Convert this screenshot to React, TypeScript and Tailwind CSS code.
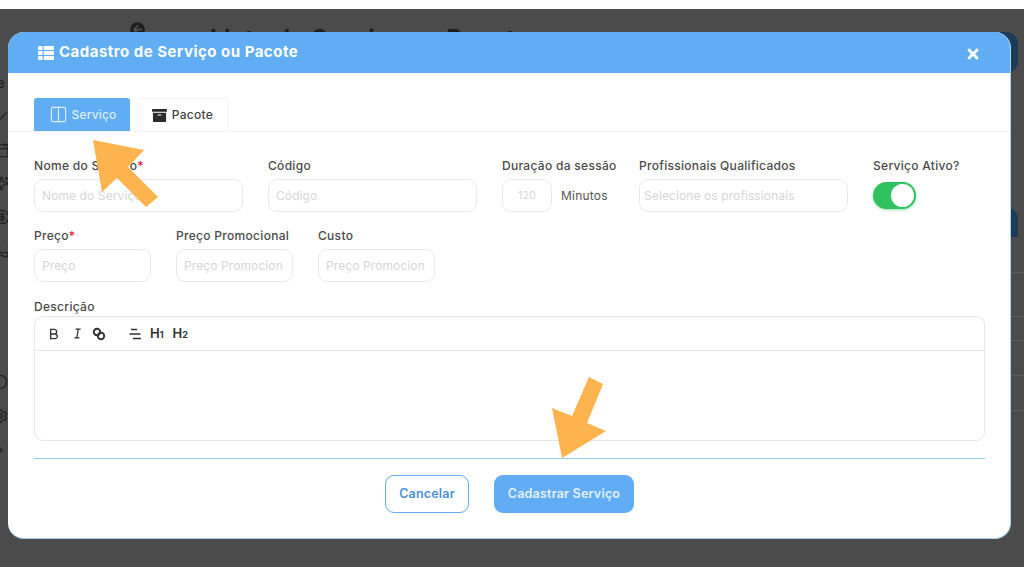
import React from "react";
import { FaThList, FaTimes, FaArchive, FaArrowCircleLeft } from "react-icons/fa";
import { RiBold, RiItalic } from "react-icons/ri";
import { Columns2, Calendar, Check, Sparkles, CircleDollarSign, Phone, Circle, Settings, ChevronRight } from "lucide-react";

const font = "font-['Inter','Liberation_Sans',sans-serif]";
const labelClass =
  "h-[22px] pt-[1px] text-[12px] font-medium leading-[16px] tracking-[0.3px] text-[#4a4a4a] whitespace-nowrap";

const Field = ({
  label,
  placeholder,
  width,
  required,
  inset = "px-[7px]",
}: {
  label: string;
  placeholder: string;
  width: string;
  required?: boolean;
  inset?: string;
}) => (
  <div className={`flex flex-col ${width}`}>
    <label className={labelClass}>
      {label}
      {required && <span className="text-[#e5203a]">*</span>}
    </label>
    <div className={`flex h-[33px] items-center rounded-[9px] border border-[#e9e9e9] bg-white ${inset}`}>
      <span className="text-[12px] tracking-[0.1px] whitespace-nowrap text-[#d6d6d6]">{placeholder}</span>
    </div>
  </div>
);

const ArrowOne = () => (
  <svg className="absolute left-[90px] top-[136px] h-[75px] w-[72px]" viewBox="90 136 72 75">
    <polygon
      points="93,140 144,150 128,167 158,197 146,207 117,178 102,192"
      fill="#fdb44f"
    />
  </svg>
);

const ArrowTwo = () => (
  <svg className="absolute left-[548px] top-[374px] h-[88px] w-[60px]" viewBox="548 374 60 88">
    <polygon
      points="589,377 603,384 587,423 606,431 562,458 552,408 572,416"
      fill="#fdb44f"
    />
  </svg>
);

const App = () => {
  return (
    <div className={`flex h-[576px] w-[1024px] flex-col overflow-hidden bg-white ${font}`}>
      <div className="relative mt-[9px] h-[558px] w-full overflow-hidden bg-[#4b4b4b]">
        {/* page behind the modal */}
        <FaArrowCircleLeft className="absolute left-[130px] top-[13px] text-[15px] text-[#1d1d1d]" />
        <div className="absolute left-[210px] top-0 h-[23px] overflow-hidden pt-[15px] text-[24px] font-bold leading-[30px] tracking-[0.5px] text-[#1d1d1d] whitespace-nowrap">
          Lista de Serviços e Pacotes
        </div>
        <div className="absolute left-[-6px] top-[66px] flex flex-col gap-[18px] text-[#222222]">
          <span className="pl-[3px] text-[13px] font-semibold leading-[16px]">e</span>
          <Check size={15} />
          <Calendar size={16} />
          <Sparkles size={15} />
          <CircleDollarSign size={16} />
          <Phone size={15} />
        </div>
        <div className="absolute left-[-8px] top-[365px] flex flex-col gap-[18px] text-[#222222]">
          <Circle size={16} />
          <Settings size={16} />
          <ChevronRight size={16} />
        </div>
        <div className="absolute left-[1000px] top-[23px] h-[41px] w-[18px] rounded-r-[12px] bg-[#1b3b57]" />
        <div className="absolute left-[1000px] top-[199px] h-[29px] w-[18px] rounded-tr-[10px] bg-[#1b3b57]" />
        <div className="absolute left-[1011px] top-[263px] h-px w-[13px] bg-[#5d5d5d]" />
        <div className="absolute left-[1011px] top-[307px] h-px w-[13px] bg-[#5d5d5d]" />
        <div className="absolute left-[1011px] top-[331px] h-px w-[13px] bg-[#5d5d5d]" />
        <div className="absolute left-[1011px] top-[366px] h-px w-[13px] bg-[#5d5d5d]" />
        <div className="absolute left-[1011px] top-[401px] h-px w-[13px] bg-[#5d5d5d]" />

        <div className="absolute left-[8px] top-[23px] flex h-[507px] w-[1003px] flex-col overflow-hidden rounded-[16px] border-b border-r border-[#a9d3ec] bg-white">
          <div className="flex h-[41px] shrink-0 items-center justify-between bg-[#60adf3] pl-[30px] pr-[29px] text-white">
            <div className="flex items-center gap-[5px]">
              <FaThList className="text-[16px]" />
              <span className="text-[15px] font-bold tracking-[0.5px]">Cadastro de Serviço ou Pacote</span>
            </div>
            <FaTimes className="mt-[3px] text-[16px]" />
          </div>

          <div className="mt-[25px] flex h-[34px] shrink-0 gap-[7px] border-b border-[#f3f3f3] pl-[26px]">
            <div className="flex w-[96px] items-center justify-center gap-[3px] rounded-t-[3px] bg-[#60adf3] pl-[2px] text-[12px] font-medium tracking-[0.2px] text-[#dcedfc]">
              <Columns2 size={19} strokeWidth={1.4} />
              Serviço
            </div>
            <div className="flex w-[91px] items-center justify-center gap-[5px] rounded-t-[3px] border border-b-0 border-[#f3f3f3] text-[12px] font-medium tracking-[0.3px] text-[#444444]">
              <FaArchive className="text-[15px] text-[#2b2b2b]" />
              Pacote
            </div>
          </div>

          <div className="flex flex-col pl-[26px] pr-[25px] pt-[25px]">
            <div className="flex items-start">
              <Field label="Nome do Serviço" placeholder="Nome do Serviço" width="w-[209px]" required />
              <div className="ml-[25px]">
                <Field label="Código" placeholder="Código" width="w-[209px]" />
              </div>
              <div className="ml-[25px] flex w-[137px] flex-col">
                <label className={labelClass}>Duração da sessão</label>
                <div className="flex items-center gap-[9px]">
                  <div className="flex h-[33px] w-[50px] items-center justify-center rounded-[9px] border border-[#e9e9e9] text-[11px] text-[#d6d6d6]">
                    120
                  </div>
                  <span className="text-[12px] tracking-[0.2px] text-[#555555]">Minutos</span>
                </div>
              </div>
              <Field
                label="Profissionais Qualificados"
                placeholder="Selecione os profissionais"
                width="w-[209px]"
                inset="px-[4px]"
              />
              <div className="ml-[25px] flex flex-col">
                <label className={labelClass}>Serviço Ativo?</label>
                <div className="mt-[3px] flex h-[27px] w-[43px] items-center justify-end rounded-full bg-[#2fc25e] pr-[2px] shadow-[0_1px_3px_rgba(47,194,94,0.5)]">
                  <div className="h-[23px] w-[23px] rounded-full bg-white" />
                </div>
              </div>
            </div>

            <div className="mt-[15px] flex gap-[25px]">
              <Field label="Preço" placeholder="Preço" width="w-[117px]" required />
              <Field label="Preço Promocional" placeholder="Preço Promocion" width="w-[117px]" />
              <Field label="Custo" placeholder="Preço Promocion" width="w-[117px]" />
            </div>

            <label className="mt-[17px] h-[17px] text-[12px] font-medium leading-[16px] tracking-[0.3px] text-[#4a4a4a]">
              Descrição
            </label>
            <div className="h-[125px] rounded-[9px] border border-[#e6e6e6]">
              <div className="flex h-[34px] items-center border-b border-[#e6e6e6] pl-[11px] text-[#333333]">
                <RiBold size={16} />
                <RiItalic size={15} className="ml-[8px]" />
                <svg className="ml-[7px]" width="14" height="14" viewBox="0 0 14 14">
                  <circle cx="5" cy="5" r="3.2" stroke="#333333" strokeWidth="1.9" fill="none" />
                  <circle cx="9" cy="9" r="3.2" stroke="#333333" strokeWidth="1.9" fill="none" />
                </svg>
                <svg className="ml-[22px]" width="14" height="14" viewBox="0 0 14 14">
                  <path d="M3 2.5h6M1.5 7h11M5 11.5h8" stroke="#333333" strokeWidth="1.5" fill="none" />
                </svg>
                <span className="ml-[8px] text-[13px] font-semibold leading-none">
                  H<span className="text-[9px] font-bold">1</span>
                </span>
                <span className="ml-[9px] text-[13px] font-semibold leading-none">
                  H<span className="text-[9px] font-bold">2</span>
                </span>
              </div>
            </div>

            <div className="mt-[17px] h-px bg-[#8ecde4]" />

            <div className="mt-[16px] flex justify-center gap-[25px]">
              <button className="h-[38px] w-[84px] rounded-[9px] border border-[#60adf3] text-[12.5px] font-semibold tracking-[0.2px] text-[#4b93d6]">
                Cancelar
              </button>
              <button className="h-[38px] w-[140px] rounded-[9px] bg-[#60adf3] pt-[1px] text-[12.5px] font-semibold tracking-[0.2px] text-[#e3f0fc]">
                Cadastrar Serviço
              </button>
            </div>
          </div>
        </div>
      </div>
      <div className="pointer-events-none">
        <ArrowOne />
        <ArrowTwo />
      </div>
    </div>
  );
};

export default App;
